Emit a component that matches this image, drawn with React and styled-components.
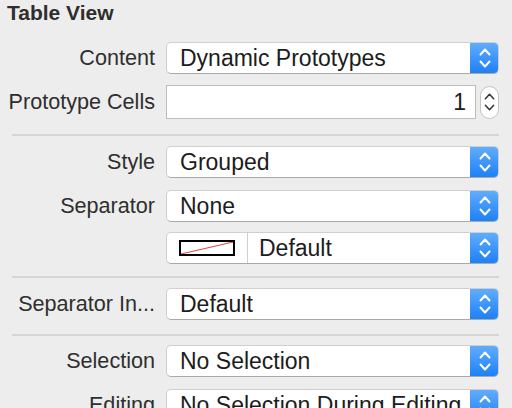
import React from "react";
import styled, { createGlobalStyle } from "styled-components";

const GlobalStyle = createGlobalStyle`
  html, body {
    margin: 0;
    padding: 0;
    background: #ededed;
  }
  body {
    font-family: "Helvetica Neue", "Liberation Sans", Arial, sans-serif;
    color: #2b2b2b;
    width: 512px;
    height: 408px;
    overflow: hidden;
  }
`;

function UpDown({ color = "#fff", width = 2 }) {
  return (
    <svg width="12" height="20" viewBox="0 0 12 20">
      <polyline
        points="1.5,6.5 6,1.5 10.5,6.5"
        fill="none"
        stroke={color}
        strokeWidth={width}
        strokeLinecap="round"
        strokeLinejoin="round"
      />
      <polyline
        points="1.5,13.5 6,18.5 10.5,13.5"
        fill="none"
        stroke={color}
        strokeWidth={width}
        strokeLinecap="round"
        strokeLinejoin="round"
      />
    </svg>
  );
}

function Popup({ children, value }) {
  return (
    <PopupBox>
      {children}
      <PopupValue>{value}</PopupValue>
      <PopupArrows>
        <UpDown />
      </PopupArrows>
    </PopupBox>
  );
}

function App() {
  return (
    <>
      <GlobalStyle />
      <Panel>
        <Title>Table View</Title>
        <Section $top={17} $gap={11}>
          <Row>
            <Label>Content</Label>
            <Popup value="Dynamic Prototypes" />
          </Row>
          <Row $height={34}>
            <Label>Prototype Cells</Label>
            <FieldGroup>
              <NumberField>1</NumberField>
              <Stepper>
                <UpDown color="#333" width={1.6} />
              </Stepper>
            </FieldGroup>
          </Row>
        </Section>
        <Divider $top={15} />
        <Section $top={10} $gap={12}>
          <Row>
            <Label>Style</Label>
            <Popup value="Grouped" />
          </Row>
          <Row>
            <Label>Separator</Label>
            <Popup value="None" />
          </Row>
          <Row $shift={-2}>
            <span />
            <Popup value="Default">
              <ColorWell>
                <Swatch>
                  <svg width="52" height="12" viewBox="0 0 52 12">
                    <line x1="0" y1="12" x2="52" y2="0" stroke="#e0443a" strokeWidth="1" />
                  </svg>
                </Swatch>
              </ColorWell>
            </Popup>
          </Row>
        </Section>
        <Divider $top={12} />
        <Section $top={10} $gap={12}>
          <Row>
            <Label>Separator In...</Label>
            <Popup value="Default" />
          </Row>
        </Section>
        <Divider $top={14} />
        <Section $top={9} $gap={12}>
          <Row>
            <Label>Selection</Label>
            <Popup value="No Selection" />
          </Row>
          <Row>
            <Label>Editing</Label>
            <Popup value="No Selection During Editing" />
          </Row>
        </Section>
      </Panel>
    </>
  );
}

const Panel = styled.div`
  display: flex;
  flex-direction: column;
  padding: 0 13px 0 12px;
`;

const Title = styled.h2`
  margin: 1px 0 0 -5px;
  font-size: 21px;
  line-height: 24px;
  font-weight: 700;
  color: #2e2e2e;
`;

const Section = styled.div`
  display: flex;
  flex-direction: column;
  gap: ${(p) => p.$gap}px;
  margin-top: ${(p) => p.$top}px;
`;

const Row = styled.div`
  display: grid;
  grid-template-columns: 143px 1fr;
  column-gap: 11px;
  align-items: center;
  height: ${(p) => p.$height || 32}px;
  margin-top: ${(p) => p.$shift || 0}px;
`;

const Label = styled.div`
  text-align: right;
  font-size: 21.6px;
  white-space: nowrap;
  color: #2f2f2f;
  margin-left: -12px;
`;

const PopupBox = styled.div`
  display: flex;
  align-items: stretch;
  height: 32px;
  box-sizing: border-box;
  background: #fff;
  border-radius: 5px;
  border: 1px solid #cfcfcf;
  border-bottom-color: #a9a9a9;
  overflow: hidden;
`;

const PopupValue = styled.div`
  flex: 1;
  min-width: 0;
  padding-left: 13px;
  font-size: 23px;
  line-height: 30px;
  white-space: nowrap;
  overflow: hidden;
  color: #1c1c1c;
`;

const PopupArrows = styled.div`
  width: 29px;
  flex: none;
  margin: -1px -1px -1px 0;
  display: flex;
  align-items: center;
  justify-content: center;
  background: linear-gradient(#63aefc, #1b7ff6);
`;

const FieldGroup = styled.div`
  display: flex;
  align-items: center;
  gap: 4px;
  height: 100%;
`;

const NumberField = styled.div`
  flex: 1;
  height: 100%;
  box-sizing: border-box;
  background: #fff;
  border: 1px solid #bdbdbd;
  text-align: right;
  padding-right: 9px;
  font-size: 23px;
  line-height: 32px;
  color: #1c1c1c;
`;

const Stepper = styled.div`
  width: 19px;
  height: 33px;
  box-sizing: border-box;
  background: #fff;
  border: 1px solid #c4c4c4;
  border-radius: 10px;
  display: flex;
  align-items: center;
  justify-content: center;
  svg {
    width: 11px;
  }
`;

const ColorWell = styled.div`
  width: 80px;
  flex: none;
  display: flex;
  align-items: center;
  justify-content: center;
  border-right: 1px solid #cfcfcf;
  margin-right: -2px;
`;

const Swatch = styled.div`
  width: 56px;
  height: 16px;
  box-sizing: border-box;
  border: 2px solid #000;
  background: #fff;
  display: flex;
  svg {
    display: block;
    width: 100%;
    height: 100%;
  }
`;

const Divider = styled.div`
  height: 2px;
  background: #d5d5d5;
  margin-top: ${(p) => p.$top}px;
`;

export default App;
